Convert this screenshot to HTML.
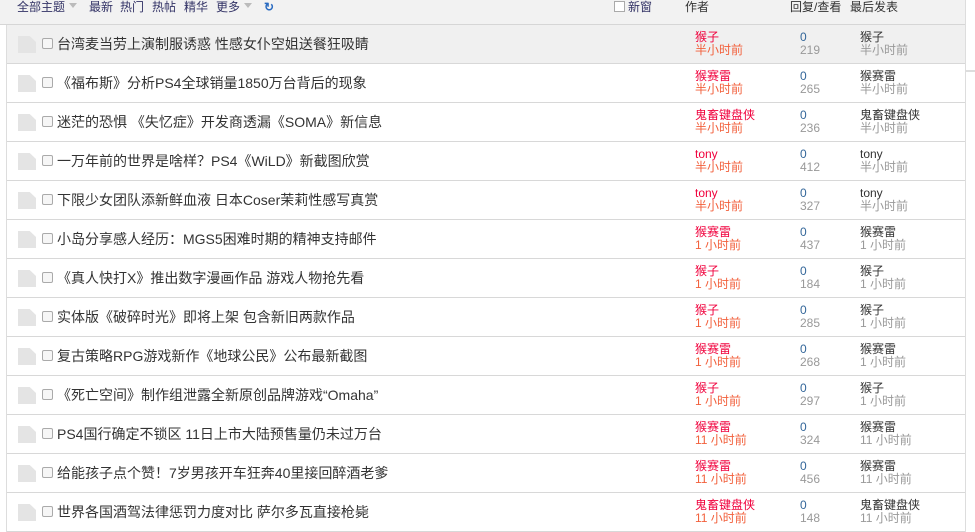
<!DOCTYPE html>
<html><head><meta charset="utf-8"><style>
*{margin:0;padding:0;box-sizing:border-box}
body{width:975px;height:525px;overflow:hidden;background:#fff;font-family:"Liberation Sans","Noto Sans CJK SC",sans-serif;font-size:12px;color:#333;position:relative}
.hd{position:absolute;left:0;top:0;width:966px;height:25px;background:#f2f2f2;border-bottom:1px solid #d6d6d6}
.hd span{position:absolute;top:0;line-height:14px;color:#333}
.arr{display:inline-block;width:0;height:0;border:4px solid transparent;border-top:5px solid #bbb;margin-left:4px;vertical-align:-1px}
.pop{position:absolute;left:965px;top:0;width:10px;height:72px;border-left:1px solid #ddd;border-bottom:2px solid #ddd;background:#fff}
.list{position:absolute;left:6px;top:25px;width:960px;border-left:1px solid #ddd;border-right:1px solid #ddd}
.row{height:39px;border-bottom:1px solid #d8d8d8;position:relative;background:#fff}
.row.g{background:#f0f0f0}
.ic{position:absolute;left:11px;top:11px;width:18px;height:17px;background:#e4e4e4;clip-path:polygon(0 0,65% 0,100% 35%,100% 100%,0 100%)}
.cb{position:absolute;left:35px;top:13px;width:11px;height:11px;border:1px solid #aaa;border-radius:2px;background:#f6f6f6}
.t{position:absolute;left:50px;top:10px;font-size:14px;line-height:18px;color:#333;white-space:nowrap}
.a{position:absolute;left:688px;top:6px;line-height:13px}
.a b{font-weight:normal;color:#f0003c;display:block}
.a i{font-style:normal;color:#f2603c;display:block}
.c{position:absolute;left:793px;top:6px;line-height:13px;color:#369}
.c i{font-style:normal;color:#999;display:block}
.l{position:absolute;left:853px;top:6px;line-height:13px;color:#333}
.l i{font-style:normal;color:#999;display:block}
</style></head><body>
<div class="hd">
<span style="left:17px;color:#336">全部主题<i class="arr"></i></span>
<span style="left:89px;color:#336">最新</span>
<span style="left:120px;color:#336">热门</span>
<span style="left:152px;color:#336">热帖</span>
<span style="left:184px;color:#336">精华</span>
<span style="left:216px;color:#336">更多<i class="arr"></i></span>
<span style="left:264px;color:#2a6bc1;font-weight:bold">↻</span>
<span style="left:614px;top:1px;width:11px;height:11px;border:1px solid #aaa;background:#fff"></span>
<span style="left:628px;color:#336">新窗</span>
<span style="left:685px">作者</span>
<span style="left:790px">回复/查看</span>
<span style="left:850px">最后发表</span>
</div>
<div class="pop"></div>
<div class="list">
<div class="row g"><i class="ic"></i><i class="cb"></i><div class="t">台湾麦当劳上演制服诱惑 性感女仆空姐送餐狂吸睛</div><div class="a"><b>猴子</b><i>半小时前</i></div><div class="c">0<i>219</i></div><div class="l">猴子<i>半小时前</i></div></div>
<div class="row"><i class="ic"></i><i class="cb"></i><div class="t">《福布斯》分析PS4全球销量1850万台背后的现象</div><div class="a"><b>猴赛雷</b><i>半小时前</i></div><div class="c">0<i>265</i></div><div class="l">猴赛雷<i>半小时前</i></div></div>
<div class="row"><i class="ic"></i><i class="cb"></i><div class="t">迷茫的恐惧 《失忆症》开发商透漏《SOMA》新信息</div><div class="a"><b>鬼畜键盘侠</b><i>半小时前</i></div><div class="c">0<i>236</i></div><div class="l">鬼畜键盘侠<i>半小时前</i></div></div>
<div class="row"><i class="ic"></i><i class="cb"></i><div class="t">一万年前的世界是啥样？PS4《WiLD》新截图欣赏</div><div class="a"><b>tony</b><i>半小时前</i></div><div class="c">0<i>412</i></div><div class="l">tony<i>半小时前</i></div></div>
<div class="row"><i class="ic"></i><i class="cb"></i><div class="t">下限少女团队添新鲜血液 日本Coser茉莉性感写真赏</div><div class="a"><b>tony</b><i>半小时前</i></div><div class="c">0<i>327</i></div><div class="l">tony<i>半小时前</i></div></div>
<div class="row"><i class="ic"></i><i class="cb"></i><div class="t">小岛分享感人经历：MGS5困难时期的精神支持邮件</div><div class="a"><b>猴赛雷</b><i>1 小时前</i></div><div class="c">0<i>437</i></div><div class="l">猴赛雷<i>1 小时前</i></div></div>
<div class="row"><i class="ic"></i><i class="cb"></i><div class="t">《真人快打X》推出数字漫画作品 游戏人物抢先看</div><div class="a"><b>猴子</b><i>1 小时前</i></div><div class="c">0<i>184</i></div><div class="l">猴子<i>1 小时前</i></div></div>
<div class="row"><i class="ic"></i><i class="cb"></i><div class="t">实体版《破碎时光》即将上架 包含新旧两款作品</div><div class="a"><b>猴子</b><i>1 小时前</i></div><div class="c">0<i>285</i></div><div class="l">猴子<i>1 小时前</i></div></div>
<div class="row"><i class="ic"></i><i class="cb"></i><div class="t">复古策略RPG游戏新作《地球公民》公布最新截图</div><div class="a"><b>猴赛雷</b><i>1 小时前</i></div><div class="c">0<i>268</i></div><div class="l">猴赛雷<i>1 小时前</i></div></div>
<div class="row"><i class="ic"></i><i class="cb"></i><div class="t">《死亡空间》制作组泄露全新原创品牌游戏“Omaha”</div><div class="a"><b>猴子</b><i>1 小时前</i></div><div class="c">0<i>297</i></div><div class="l">猴子<i>1 小时前</i></div></div>
<div class="row"><i class="ic"></i><i class="cb"></i><div class="t">PS4国行确定不锁区 11日上市大陆预售量仍未过万台</div><div class="a"><b>猴赛雷</b><i>11 小时前</i></div><div class="c">0<i>324</i></div><div class="l">猴赛雷<i>11 小时前</i></div></div>
<div class="row"><i class="ic"></i><i class="cb"></i><div class="t">给能孩子点个赞！7岁男孩开车狂奔40里接回醉酒老爹</div><div class="a"><b>猴赛雷</b><i>11 小时前</i></div><div class="c">0<i>456</i></div><div class="l">猴赛雷<i>11 小时前</i></div></div>
<div class="row"><i class="ic"></i><i class="cb"></i><div class="t">世界各国酒驾法律惩罚力度对比 萨尔多瓦直接枪毙</div><div class="a"><b>鬼畜键盘侠</b><i>11 小时前</i></div><div class="c">0<i>148</i></div><div class="l">鬼畜键盘侠<i>11 小时前</i></div></div>
</div>
</body></html>
